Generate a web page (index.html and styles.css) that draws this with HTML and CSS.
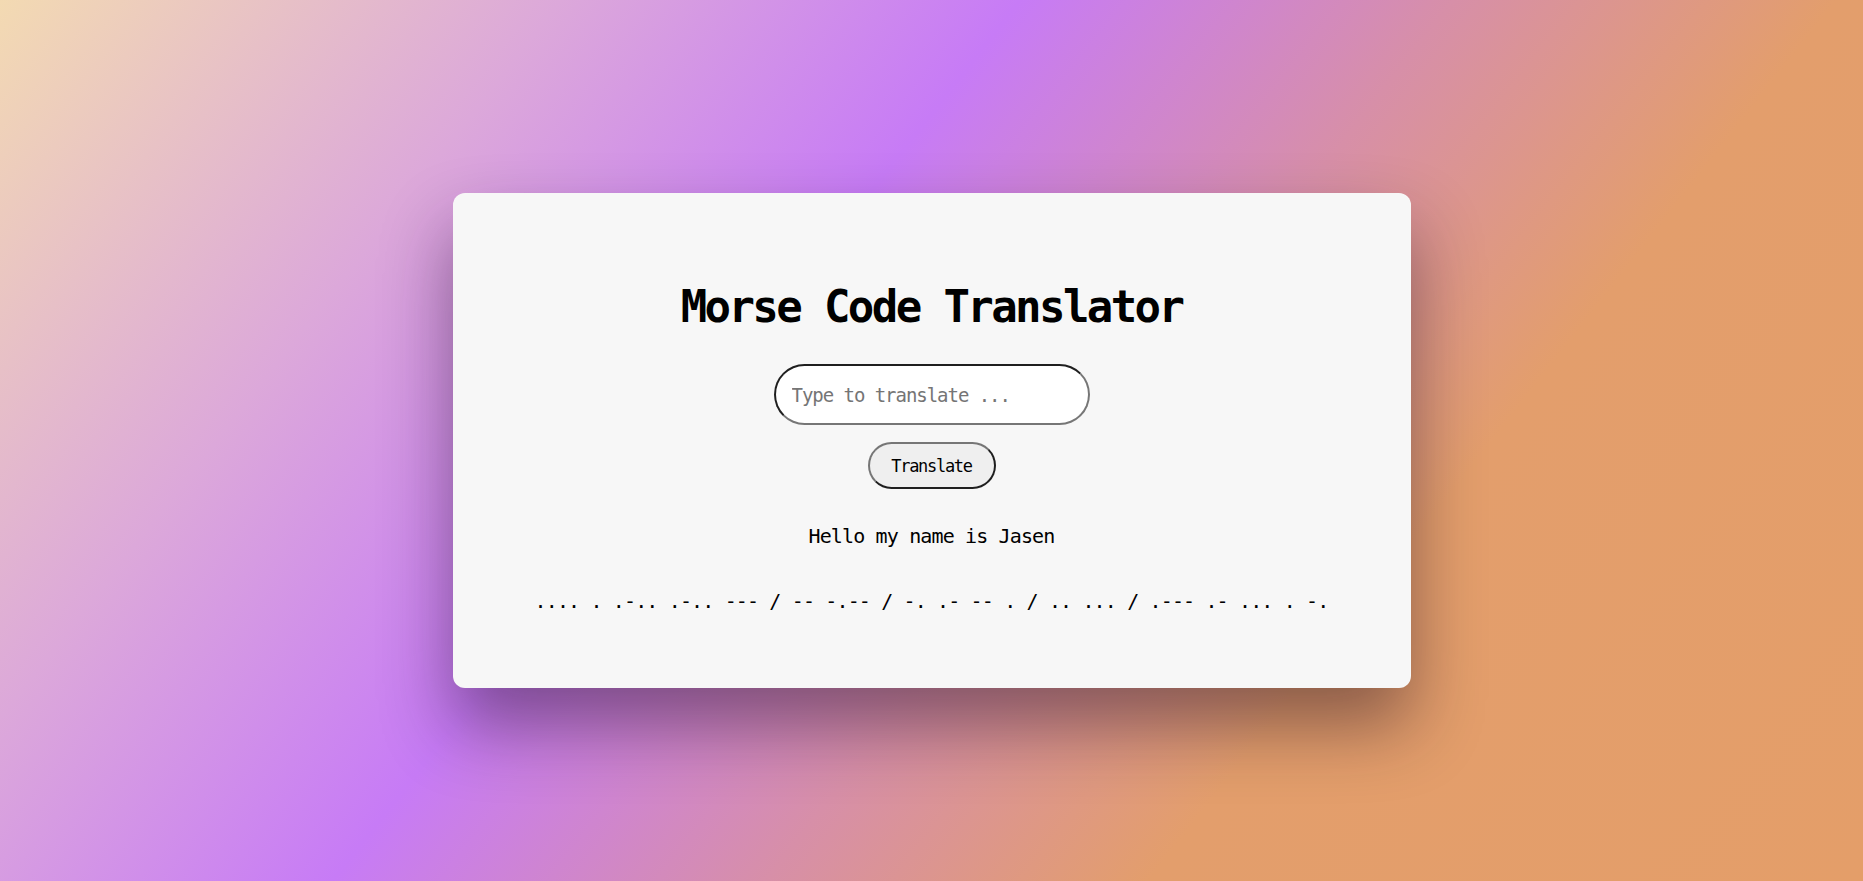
FILE: index.html
```html
<!DOCTYPE html>
<html lang="en">
<head>
<meta charset="utf-8">
<title>Morse Code Translator</title>
<link rel="stylesheet" href="styles.css">
</head>
<body>
<main class="page">
  <section class="card">
    <h1 class="title">Morse Code Translator</h1>
    <input class="field" type="text" placeholder="Type to translate ...">
    <button class="btn" type="button">Translate</button>
    <p class="plain">Hello my name is Jasen</p>
    <p class="morse">.... . .-.. .-.. --- / -- -.-- / -. .- -- . / .. ... / .--- .- ... . -.</p>
  </section>
</main>
</body>
</html>
```

FILE: styles.css
```css
html, body {
  margin: 0;
  padding: 0;
}

body {
  font-family: "DejaVu Sans Mono", "Liberation Mono", monospace;
  color: #000;
}

.page {
  min-height: 100vh;
  display: flex;
  align-items: center;
  justify-content: center;
  background: linear-gradient(128deg, #f3dab2 0%, #dca8da 22%, #c77bf6 40%, #d78fa8 57%, #e39e6c 72%, #e49e69 100%);
}

.card {
  box-sizing: border-box;
  width: 958px;
  height: 495px;
  padding-top: 86px;
  background: #f7f7f7;
  border-radius: 12px;
  box-shadow: 0 38px 70px rgba(30, 10, 30, 0.45);
  display: flex;
  flex-direction: column;
  align-items: center;
}

.title {
  margin: 0;
  font-size: 44px;
  line-height: 56px;
  font-weight: bold;
  letter-spacing: -2.6px;
}

.field {
  box-sizing: border-box;
  margin-top: 29px;
  width: 316px;
  height: 61px;
  padding: 0 16px;
  border-width: 2px;
  border-style: solid;
  border-color: #1f1f1f #767676 #767676 #1f1f1f;
  border-radius: 31px;
  background: #fff;
  font-family: "DejaVu Sans Mono", "Liberation Mono", monospace;
  font-size: 19px;
  letter-spacing: -1.04px;
  color: #000;
  outline: none;
}

.field::placeholder {
  color: #757575;
}

.btn {
  box-sizing: border-box;
  margin-top: 17px;
  width: 128px;
  height: 47px;
  padding: 0;
  border-width: 2px;
  border-style: solid;
  border-color: #767676 #1f1f1f #1f1f1f #767676;
  border-radius: 24px;
  background: #efefef;
  font-family: "DejaVu Sans Mono", "Liberation Mono", monospace;
  font-size: 17px;
  letter-spacing: -1.3px;
  color: #000;
}

.plain,
.morse {
  margin: 0;
  font-size: 20px;
  line-height: 28px;
  letter-spacing: -0.86px;
  white-space: pre;
}

.plain {
  margin-top: 33px;
}

.morse {
  margin-top: 37px;
}
```
